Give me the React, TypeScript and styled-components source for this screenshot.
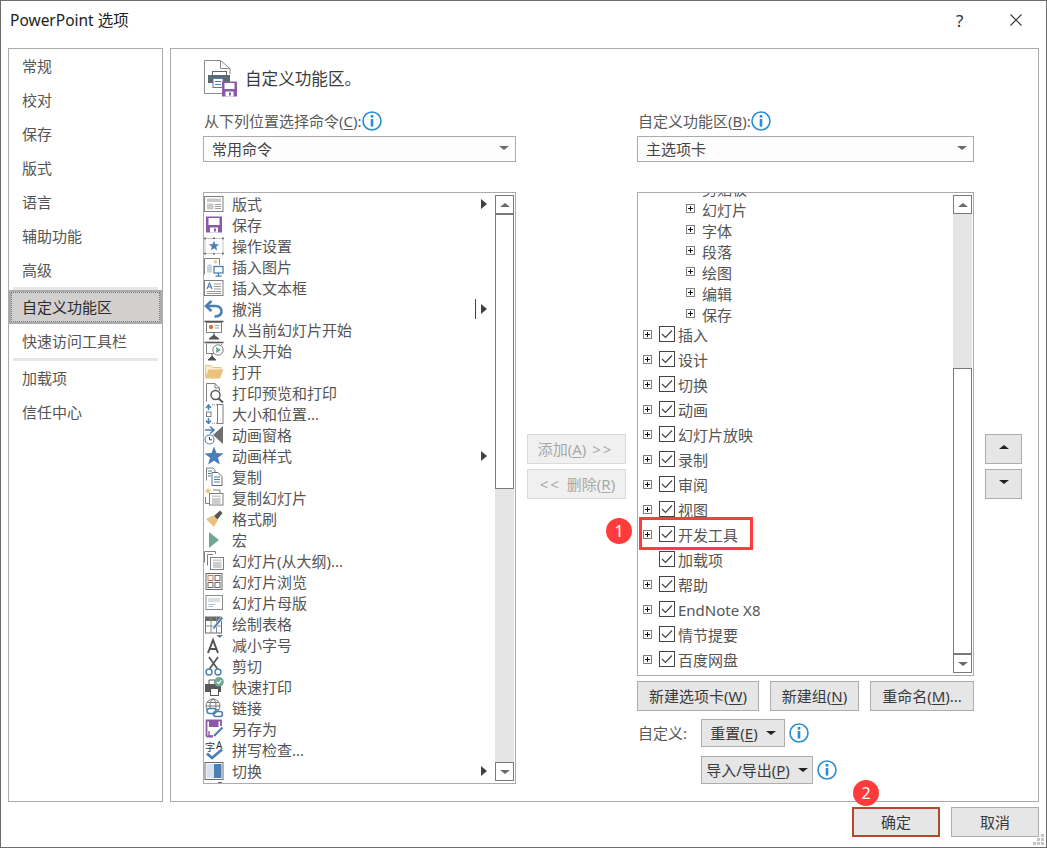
import React from 'react';
import styled, { createGlobalStyle } from 'styled-components';

const GlobalStyle = createGlobalStyle`
  html, body {
    margin: 0;
    padding: 0;
    background: #fff;
  }
  * {
    box-sizing: border-box;
  }
`;

const Dialog = styled.div`
  position: relative;
  width: 1047px;
  height: 848px;
  display: flex;
  flex-direction: column;
  overflow: hidden;
  background: #fff;
  border: 1px solid #6d6d6d;
  font-family: "Noto Sans", "Noto Sans CJK SC", sans-serif;
  font-size: 15px;
  line-height: 21px;
  color: #555;
`;

const TitleBar = styled.div`
  height: 47px;
  flex: none;
  display: flex;
  align-items: center;
  padding: 0 24px 9px 9px;
  color: #222;
  font-size: 15.5px;
`;

const TitleText = styled.div`
  flex: 1;
`;

const HelpGlyph = styled.div`
  width: 54px;
  font-size: 17px;
  color: #333;
`;

const Body = styled.div`
  display: flex;
  gap: 7px;
  padding-left: 7px;
  height: 754px;
  flex: none;
`;

const Sidebar = styled.div`
  width: 155px;
  flex: none;
  border: 1px solid #ababab;
`;

const NavItem = styled.div<{ $active?: boolean }>`
  height: 34px;
  display: flex;
  align-items: center;
  padding-left: ${(p) => (p.$active ? '11px' : '13px')};
  color: ${(p) => (p.$active ? '#2b2b2b' : '#555')};
  background: ${(p) => (p.$active ? '#d2d0ce' : 'transparent')};
  border: ${(p) => (p.$active ? '2px solid #ababab' : 'none')};
  outline: ${(p) => (p.$active ? '1px dotted #777' : 'none')};
  outline-offset: -3px;
`;

const NavRule = styled.div`
  height: 3px;
  margin: 0 4px;
  background: #e6e6e6;
`;

const Panel = styled.div`
  width: 869px;
  flex: none;
  border: 1px solid #ababab;
  padding-left: 32px;
`;

const PanelHeader = styled.div`
  height: 59px;
  display: flex;
  align-items: center;
  gap: 7px;
  font-size: 16.6px;
  color: #3c3c3c;
`;

const Columns = styled.div`
  display: flex;
  align-items: flex-start;
`;

const Column = styled.div<{ $width: number }>`
  width: ${(p) => p.$width}px;
  flex: none;
`;

const ActionColumn = styled.div<{ $width: number }>`
  width: ${(p) => p.$width}px;
  flex: none;
  padding: 326px 0 0 11px;
  display: flex;
  flex-direction: column;
  gap: 5px;
`;

const FieldLabel = styled.div`
  height: 26px;
  margin-bottom: 2px;
  display: flex;
  align-items: center;
  padding-left: 1px;
  color: #5a5a5a;
`;

const Select = styled.div`
  height: 26px;
  margin-bottom: 30px;
  display: flex;
  align-items: center;
  justify-content: space-between;
  padding: 0 3px 0 8px;
  background: #fdfdfd;
  border: 1px solid #ababab;
  color: #444;
`;

const Caret = styled.span<{ $up?: boolean; $size?: number; $color?: string }>`
  display: inline-block;
  width: 0;
  height: 0;
  flex: none;
  border-left: ${(p) => p.$size ?? 5}px solid transparent;
  border-right: ${(p) => p.$size ?? 5}px solid transparent;
  ${(p) => (p.$up ? 'border-bottom' : 'border-top')}: ${(p) => (p.$size ?? 5) - 1}px solid ${(p) => p.$color ?? '#6a6a6a'};
`;

const SelectCaret = styled(Caret)`
  margin: 0 3px 2px 0;
`;

const MenuCaret = styled(Caret)`
  margin-left: 8px;
`;

const ListBox = styled.div<{ $height: number }>`
  height: ${(p) => p.$height}px;
  display: flex;
  background: #fff;
  border: 1px solid #ababab;
`;

const ListBody = styled.div`
  flex: 1;
  min-width: 0;
  overflow: hidden;
`;

const CommandRow = styled.div`
  height: 21px;
  display: flex;
  align-items: center;
  gap: 8px;
  padding-right: 8px;
  white-space: nowrap;
`;

const RowText = styled.span<{ $drop: number }>`
  padding-top: ${(p) => p.$drop * 2}px;
`;

const SubArrow = styled.span<{ $split?: boolean }>`
  margin-left: auto;
  display: flex;
  align-items: center;
  height: 20px;
  ${(p) => (p.$split ? 'border-left: 1px solid #444; padding-left: 5px;' : '')}
  &::after {
    content: '';
    border-top: 5px solid transparent;
    border-bottom: 5px solid transparent;
    border-left: 6px solid #404040;
  }
`;

const ScrollBar = styled.div`
  width: 19px;
  flex: none;
  margin: 2px 1px 2px 0;
  display: flex;
  flex-direction: column;
  background: #e5e5e5;
`;

const ScrollButton = styled.div`
  height: 19px;
  flex: none;
  display: flex;
  align-items: center;
  justify-content: center;
  background: #fff;
  border: 1px solid #7a7a7a;
`;

const ScrollTrack = styled.div<{ $grow: number }>`
  flex: ${(p) => p.$grow};
`;

const ScrollThumb = styled.div<{ $size: number }>`
  height: ${(p) => p.$size}px;
  flex: none;
  background: #fff;
  border: 1px solid #7a7a7a;
`;

const ClippedRows = styled.div`
  margin-top: -16px;
  margin-bottom: -2px;
`;

const TreeChild = styled.div`
  height: 21px;
  display: flex;
  align-items: center;
  gap: 7px;
  padding-left: 48px;
`;

const TreeRow = styled.div`
  height: 25px;
  display: flex;
  align-items: center;
  padding-left: 5px;
`;

const Expander = styled.span<{ $hidden?: boolean }>`
  position: relative;
  width: 9px;
  height: 9px;
  flex: none;
  margin-top: -1px;
  border: 1px solid ${(p) => (p.$hidden ? 'transparent' : '#808080')};
  &::before, &::after {
    content: '';
    display: ${(p) => (p.$hidden ? 'none' : 'block')};
    position: absolute;
    background: #111;
  }
  &::before {
    left: 1px;
    top: 3px;
    width: 5px;
    height: 1px;
  }
  &::after {
    left: 3px;
    top: 1px;
    width: 1px;
    height: 5px;
  }
`;

const CheckBox = styled.span`
  width: 16px;
  height: 16px;
  flex: none;
  margin: -1px 3px 0 7px;
  display: flex;
  align-items: center;
  justify-content: center;
  background: #fff;
  border: 1px solid #444;
`;

const ButtonRow = styled.div`
  display: flex;
  gap: 11px;
  margin-top: 5px;
`;

const PushButton = styled.div<{ $width: number; $height?: number; $primary?: boolean }>`
  width: ${(p) => p.$width}px;
  height: ${(p) => p.$height ?? 30}px;
  flex: none;
  display: flex;
  align-items: center;
  justify-content: center;
  white-space: nowrap;
  color: #3a3a3a;
  background: #e6e6e6;
  border: ${(p) => (p.$primary ? '2px solid #b5472f' : '1px solid #adadad')};
`;

const DisabledButton = styled(PushButton)`
  color: #a8a8a8;
  background: #f0f0f0;
  border-color: #dadada;
`;

const MoveButton = styled(PushButton)`
  padding-bottom: 4px;
`;

const Chevrons = styled.span`
  letter-spacing: 2px;
  margin: 0 2px;
`;

const CustomizeRow = styled.div`
  display: flex;
  align-items: flex-start;
  margin-top: 8px;
`;

const CustomizeLabel = styled.div`
  width: 64px;
  height: 28px;
  flex: none;
  display: flex;
  align-items: center;
  padding-left: 1px;
  color: #5a5a5a;
`;

const CustomizeActions = styled.div`
  display: flex;
  flex-direction: column;
  gap: 9px;
`;

const ActionLine = styled.div`
  display: flex;
  align-items: center;
  gap: 4px;
`;

const Footer = styled.div`
  display: flex;
  justify-content: flex-end;
  gap: 11px;
  padding: 5px 7px 0 0;
`;

const Mnemonic = styled.span`
  text-decoration: underline;
  text-underline-offset: 2px;
`;

const Callout = styled.div<{ $x: number; $y: number }>`
  position: absolute;
  left: ${(p) => p.$x}px;
  top: ${(p) => p.$y}px;
  width: 26px;
  height: 26px;
  display: flex;
  align-items: center;
  justify-content: center;
  border-radius: 50%;
  background: #ff3b3b;
  color: #fff;
  font-size: 16px;
`;

const Highlight = styled.div`
  position: absolute;
  left: 638px;
  top: 516px;
  width: 114px;
  height: 33px;
  border: 3px solid #ff3b3b;
`;

const Grip = styled.svg`
  position: absolute;
  right: 1px;
  bottom: 1px;
  width: 12px;
  height: 12px;
`;

const Ico = styled.svg.attrs({ viewBox: '0 0 20 20' })`
  width: 20px;
  height: 20px;
  flex: none;
`;

const BLUE = '#4a7fb5';
const GRAY = '#6f6f6f';
const LIGHT = '#c9c9c9';
const PURPLE = '#8a5aa8';
const AMBER = '#e9c27c';
const GREEN = '#6fa894';

const starPoints = (cx: number, cy: number, r: number) => {
  const pts: string[] = [];
  for (let i = 0; i < 10; i++) {
    const rad = i % 2 === 0 ? r : r * 0.42;
    const a = (Math.PI / 5) * i - Math.PI / 2;
    pts.push(`${(cx + rad * Math.cos(a)).toFixed(2)},${(cy + rad * Math.sin(a)).toFixed(2)}`);
  }
  return pts.join(' ');
};

const Info = () => (
  <Ico>
    <circle cx="10" cy="10" r="9" fill="#fff" stroke="#2a8dd4" strokeWidth="1.6" />
    <rect x="8.7" y="4" width="2.6" height="2.6" fill="#2a8dd4" />
    <rect x="8.7" y="8" width="2.6" height="7.6" fill="#2a8dd4" />
  </Ico>
);

const Tick = () => (
  <svg width="12" height="10" viewBox="0 0 12 10">
    <path d="M1 5 L4.5 8.5 L11 1.5" fill="none" stroke="#444" strokeWidth="1.2" />
  </svg>
);

const CloseGlyph = () => (
  <svg width="12" height="12" viewBox="0 0 12 12">
    <path d="M.5 .5 L11.5 11.5 M11.5 .5 L.5 11.5" stroke="#333" strokeWidth="1.1" />
  </svg>
);

const HeaderIcon = () => (
  <svg width="35" height="38" viewBox="0 0 35 38">
    <path d="M1.5 .5 H17.5 L27 8.5 V14 M27 8.5 H17.5 V.5 M1.5 .5 V33.5 H20" fill="none" stroke="#8a8a8a" />
    <rect x="9.5" y="11.5" width="14" height="7" fill="#fff" stroke="#666" />
    <path d="M5 15 H27 V23 H20 V19 H10 V23 H5 Z" fill="#5a6a70" />
    <rect x="10" y="18.5" width="10" height="9" fill="#fff" stroke={BLUE} />
    <path d="M12 21.5 H18 M12 24.5 H18" stroke={BLUE} />
    <rect x="19" y="21.5" width="15" height="15" fill={PURPLE} />
    <rect x="21.5" y="23" width="10" height="6" fill="#fff" />
    <rect x="22.5" y="31.5" width="8" height="5" fill="#fff" />
    <rect x="26" y="32.5" width="2" height="3" fill={PURPLE} />
  </svg>
);

const LayoutIcon = () => (
  <Ico>
    <rect x=".5" y="2.5" width="18.5" height="15" fill="#fff" stroke="#7f7f7f" />
    <rect x="3" y="4.5" width="14" height="3.5" fill={LIGHT} />
    <rect x="3" y="9.5" width="6.5" height="6" fill={LIGHT} />
    <path d="M11 10.5 H17 M11 12.5 H17 M11 14.5 H17" stroke="#9a9a9a" />
  </Ico>
);

const SaveIcon = () => (
  <Ico>
    <rect x="2" y="1.5" width="16" height="16" fill={PURPLE} />
    <rect x="4.5" y="3" width="11" height="7" fill="#fff" />
    <rect x="6" y="12.5" width="8" height="5" fill="#fff" />
    <rect x="10" y="13.5" width="2" height="3" fill={PURPLE} />
  </Ico>
);

const ActionIcon = () => (
  <Ico>
    <rect x="1" y="2.5" width="18" height="15" fill="none" stroke="#c4c4c4" />
    <path d="M.2 1.5 H2 V3.3 H.2 Z M9 1.5 H11 V3 H9 Z M18 1.5 H19.8 V3.3 H18 Z M.2 16.7 H2 V18.5 H.2 Z M9 17 H11 V18.5 H9 Z M18 16.7 H19.8 V18.5 H18 Z" fill="#666" />
    <polygon points={starPoints(10, 10, 5.5)} fill={BLUE} />
  </Ico>
);

const PictureIcon = () => (
  <Ico>
    <path d="M.5 17.5 V1.5 H15.5 V8" fill="#fff" stroke="#7f7f7f" />
    <path d="M3 15.5 V9 L5.5 6.5 L8 9 V15.5 Z" fill="#c5d2df" />
    <circle cx="11.5" cy="4.8" r="1.6" fill={AMBER} />
    <rect x="10" y="9.5" width="9" height="6.5" fill="#fff" stroke={BLUE} strokeWidth="1.3" />
    <path d="M14.5 16 V19 M11.5 19.2 H17.5" stroke={BLUE} strokeWidth="1.3" />
  </Ico>
);

const TextBoxIcon = () => (
  <Ico>
    <rect x=".5" y="2.5" width="18.5" height="15" fill="#fff" stroke="#7f7f7f" />
    <path d="M3 11 L5.5 5 L8 11 M4 9 H7" fill="none" stroke={BLUE} strokeWidth="1.2" />
    <path d="M10 6 H17 M10 8.5 H17 M10 11 H17 M3 13.5 H17 M3 15.5 H17" stroke="#9a9a9a" />
  </Ico>
);

const UndoIcon = () => (
  <Ico>
    <path d="M7.5 2 L2 7 L7.5 12" fill="none" stroke={BLUE} strokeWidth="2.6" />
    <path d="M3 7 H11 C16 7 18 10 17.5 13 C17 16 14.5 17.5 10.5 17.5" fill="none" stroke={BLUE} strokeWidth="2.6" />
  </Ico>
);

const ShowCurrentIcon = () => (
  <Ico>
    <path d="M.5 1.5 H19.5" stroke="#555" strokeWidth="1.6" />
    <rect x="2.5" y="2.5" width="15" height="10" fill="#fff" stroke="#7f7f7f" />
    <circle cx="7" cy="7" r="2.2" fill="#d9763c" />
    <path d="M11 5.5 H15 M11 8 H15" stroke="#999" />
    <path d="M10 12.5 V15 M10 15 L5 19 H15 Z" fill="#555" stroke="#555" />
  </Ico>
);

const ShowStartIcon = () => (
  <Ico>
    <path d="M.5 1.5 H19.5" stroke="#555" strokeWidth="1.6" />
    <path d="M2.5 3 V12.5 H12 M17.5 3 V4" fill="none" stroke="#7f7f7f" />
    <path d="M8 12.5 V15 M8 15 L4 19 H12 Z" fill="#555" stroke="#555" />
    <circle cx="14" cy="9" r="5.2" fill="#fff" stroke="#7f7f7f" />
    <polygon points="12.2,6 12.2,12 17,9" fill={GREEN} />
  </Ico>
);

const FolderIcon = () => (
  <Ico>
    <path d="M1.5 15 V3.5 H7 L9 5.5 H17 V8" fill="#fbeccd" stroke={AMBER} />
    <path d="M1 16.5 L4.5 7.5 H19.5 L16 16.5 Z" fill={AMBER} />
  </Ico>
);

const PreviewIcon = () => (
  <Ico>
    <path d="M2.5 18.5 V.5 H11 L15.5 5 V8 M11 .5 V5 H15.5" fill="#fff" stroke="#7f7f7f" />
    <circle cx="11.5" cy="12" r="4.5" fill="#fff" stroke="#555" strokeWidth="1.4" />
    <path d="M14.5 15.5 L19 19.5" stroke="#555" strokeWidth="2" />
  </Ico>
);

const SizeIcon = () => (
  <Ico>
    <path d="M4.5 6 V2 M2 4 L4.5 1 L7 4 M4.5 14 V19 M2 16.5 L4.5 19.5 L7 16.5" fill="none" stroke={BLUE} strokeWidth="1.5" />
    <rect x="2.5" y="8" width="4.5" height="4.5" fill="#fff" stroke="#7f7f7f" />
    <rect x="13.5" y=".5" width="5.5" height="19" fill="#fff" stroke="#7f7f7f" />
    <path d="M8 .8 H13 M8 19.2 H13" stroke="#7f7f7f" strokeDasharray="1 1" />
  </Ico>
);

const PaneIcon = () => (
  <Ico>
    <polygon points="19,1 19,19 9,10" fill={GRAY} />
    <path d="M1 5 H9 M6 1.5 L10 5 L6 8.5" fill="none" stroke={BLUE} strokeWidth="1.6" />
    <circle cx="5.5" cy="14.5" r="4.5" fill="#fff" stroke={BLUE} strokeWidth="1.1" />
    <path d="M5.5 12 V14.8 H8" fill="none" stroke="#444" />
  </Ico>
);

const StarIcon = () => (
  <Ico>
    <polygon points={starPoints(10, 10.5, 10)} fill={BLUE} />
  </Ico>
);

const CopyIcon = () => (
  <Ico>
    <path d="M2.5 13.5 V1 H9 L11 3 V6" fill="#fff" stroke="#7f7f7f" />
    <path d="M8 5.5 H14 L18 9.5 V18.5 H8 Z" fill="#fff" stroke="#6a6a6a" />
    <path d="M10 10 H16 M10 12.5 H16 M10 15 H16 M4 4 H8 M4 6.5 H7 M4 9 H7" stroke={BLUE} />
  </Ico>
);

const DuplicateIcon = () => (
  <Ico>
    <polygon points={starPoints(4, 3, 3.6)} fill={AMBER} />
    <path d="M1.5 9 V15.5 H5" fill="none" stroke="#7f7f7f" />
    <path d="M9 2 H16 V5" fill="none" stroke="#7f7f7f" />
    <rect x="5.5" y="5.5" width="13.5" height="11.5" fill="#fff" stroke="#7f7f7f" />
    <rect x="8" y="7.5" width="8.5" height="1.6" fill={LIGHT} />
    <path d="M8 11 H16.5 M8 13 H16.5 M8 15 H16.5" stroke="#9a9a9a" />
  </Ico>
);

const BrushIcon = () => (
  <Ico>
    <polygon points="2,10 9,6.5 14,11 10,18" fill={AMBER} />
    <path d="M10 7 L13.5 10.5 L18.5 4 L16 1.5 Z" fill="#555" />
  </Ico>
);

const MacroIcon = () => (
  <Ico>
    <polygon points="5,2 5,18 15,10" fill={GREEN} />
  </Ico>
);

const OutlineIcon = () => (
  <Ico>
    <path d="M.5 11.5 V.5 H11.5 V3" fill="#fff" stroke="#7f7f7f" />
    <path d="M3.5 14.5 V3.5 H9" fill="none" stroke="#7f7f7f" />
    <rect x="6.5" y="6.5" width="13" height="12" fill="#fff" stroke="#7f7f7f" />
    <rect x="9" y="8.5" width="8.5" height="1.6" fill={LIGHT} />
    <path d="M9 12 H17.5 M9 14 H17.5 M9 16 H17.5" stroke="#9a9a9a" />
  </Ico>
);

const SorterIcon = () => (
  <Ico>
    <rect x="2" y="1.5" width="16" height="16" fill="#fff" stroke="#6a6a6a" />
    <rect x="4" y="3.5" width="5" height="5" fill="#fff" stroke="#d9763c" />
    <rect x="11" y="3.5" width="5" height="5" fill="#fff" stroke="#6a6a6a" />
    <rect x="4" y="10.5" width="5" height="5" fill="#fff" stroke="#6a6a6a" />
    <rect x="11" y="10.5" width="5" height="5" fill="#fff" stroke="#6a6a6a" />
  </Ico>
);

const MasterIcon = () => (
  <Ico>
    <rect x="2" y="2.5" width="16.5" height="14" fill="#fff" stroke="#8a8a8a" />
    <path d="M4.5 6 H16" stroke={BLUE} strokeDasharray="1 1" />
    <path d="M4.5 8 H16" stroke="#777" strokeDasharray="1 1" />
    <path d="M4.5 11.5 H11 M4.5 13.5 H9" stroke="#a9bfd6" />
  </Ico>
);

const TableIcon = () => (
  <Ico>
    <rect x="1.5" y="3" width="16" height="16" fill="#fff" stroke="#6a6a6a" />
    <rect x="1.5" y="3" width="16" height="4" fill="#6a6a6a" />
    <path d="M1.5 12 H17.5 M7 3 V19 M12.5 3 V19" stroke="#8a8a8a" />
    <path d="M9 13 L17.5 2.5 L19.5 4 L11 14.5 L8.5 15.5 Z" fill={BLUE} stroke="#fff" strokeWidth=".6" />
  </Ico>
);

const ShrinkFontIcon = () => (
  <Ico>
    <path d="M4 18 L9 5 L14 18 M6 14 H12" fill="none" stroke="#555" strokeWidth="2" />
    <polygon points="12.5,0 19,0 15.7,3" fill={BLUE} />
  </Ico>
);

const CutIcon = () => (
  <Ico>
    <path d="M5 1 L13.5 13 M14 1 L5.5 13" stroke="#555" strokeWidth="1.7" />
    <circle cx="5" cy="16" r="3" fill="none" stroke={BLUE} strokeWidth="1.4" />
    <circle cx="14" cy="16" r="3" fill="none" stroke={BLUE} strokeWidth="1.4" />
  </Ico>
);

const QuickPrintIcon = () => (
  <Ico>
    <path d="M5 7 V3 H11 V7" fill="#fff" stroke="#555" />
    <path d="M1 7 H17 V15 H14 V12 H6 V15 H1 Z" fill="#5a5a5a" />
    <rect x="6.5" y="11.5" width="8" height="7" fill="#fff" stroke="#555" />
    <circle cx="15" cy="4.8" r="4.8" fill={GREEN} />
    <path d="M12.8 4.8 L14.5 6.5 L17.3 3.4" fill="none" stroke="#fff" strokeWidth="1.2" />
  </Ico>
);

const LinkIcon = () => (
  <Ico>
    <circle cx="9" cy="8" r="7" fill="#fff" stroke="#777" />
    <ellipse cx="9" cy="8" rx="3" ry="7" fill="none" stroke="#777" />
    <path d="M2 8 H16 M3 4.5 H15 M3 11.5 H15" stroke="#777" />
    <rect x="3" y="10.5" width="9" height="5" rx="2.5" fill="#fff" stroke={BLUE} strokeWidth="1.5" />
    <rect x="9.5" y="13.5" width="9" height="5" rx="2.5" fill="none" stroke={BLUE} strokeWidth="1.5" />
  </Ico>
);

const SaveAsIcon = () => (
  <Ico>
    <path d="M2.5 17.5 V1.5 H17 V7 M2.5 17.5 H9" fill="none" stroke={PURPLE} strokeWidth="1.8" />
    <rect x="5" y="2" width="9.5" height="6" fill={PURPLE} />
    <path d="M5 12 V17 H9" fill="none" stroke={PURPLE} strokeWidth="1.4" />
    <path d="M10 17 L18.5 8.5" stroke={BLUE} strokeWidth="2.2" />
  </Ico>
);

const SpellGlyph = styled.text`
  font-size: 10px;
  fill: #333;
`;

const SpellIcon = () => (
  <Ico>
    <SpellGlyph x="1" y="11">字</SpellGlyph>
    <SpellGlyph x="12" y="9">A</SpellGlyph>
    <path d="M3 13.5 L8 18 L18 9.5" fill="none" stroke={BLUE} strokeWidth="2.8" />
  </Ico>
);

const SwitchIcon = () => (
  <Ico>
    <rect x="1" y="1.5" width="18" height="17" fill="#fff" stroke="#6a6a6a" />
    <rect x="2.5" y="3" width="7.5" height="14" fill="#d6e2ef" />
    <rect x="10" y="3" width="7.5" height="14" fill={BLUE} />
  </Ico>
);

const ClippedIcon = () => (
  <Ico>
    <circle cx="16" cy="1.5" r="2" fill="#555" />
  </Ico>
);

type Command = {
  label: string;
  Icon: React.ComponentType;
  sub?: 'arrow' | 'split';
};

const COMMANDS: Command[] = [
  { label: '版式', Icon: LayoutIcon, sub: 'arrow' },
  { label: '保存', Icon: SaveIcon },
  { label: '操作设置', Icon: ActionIcon },
  { label: '插入图片', Icon: PictureIcon },
  { label: '插入文本框', Icon: TextBoxIcon },
  { label: '撤消', Icon: UndoIcon, sub: 'split' },
  { label: '从当前幻灯片开始', Icon: ShowCurrentIcon },
  { label: '从头开始', Icon: ShowStartIcon },
  { label: '打开', Icon: FolderIcon },
  { label: '打印预览和打印', Icon: PreviewIcon },
  { label: '大小和位置...', Icon: SizeIcon },
  { label: '动画窗格', Icon: PaneIcon },
  { label: '动画样式', Icon: StarIcon, sub: 'arrow' },
  { label: '复制', Icon: CopyIcon },
  { label: '复制幻灯片', Icon: DuplicateIcon },
  { label: '格式刷', Icon: BrushIcon },
  { label: '宏', Icon: MacroIcon },
  { label: '幻灯片(从大纲)...', Icon: OutlineIcon },
  { label: '幻灯片浏览', Icon: SorterIcon },
  { label: '幻灯片母版', Icon: MasterIcon },
  { label: '绘制表格', Icon: TableIcon },
  { label: '减小字号', Icon: ShrinkFontIcon },
  { label: '剪切', Icon: CutIcon },
  { label: '快速打印', Icon: QuickPrintIcon },
  { label: '链接', Icon: LinkIcon },
  { label: '另存为', Icon: SaveAsIcon },
  { label: '拼写检查...', Icon: SpellIcon },
  { label: '切换', Icon: SwitchIcon, sub: 'arrow' },
  { label: '', Icon: ClippedIcon },
];

const NAV_TOP = ['常规', '校对', '保存', '版式', '语言', '辅助功能', '高级'];
const TREE_CHILDREN = ['剪贴板', '幻灯片', '字体', '段落', '绘图', '编辑', '保存'];
const TREE_TABS = ['插入', '设计', '切换', '动画', '幻灯片放映', '录制', '审阅', '视图', '开发工具', '加载项', '帮助', 'EndNote X8', '情节提要', '百度网盘'];

const Scroll = ({ before, thumb }: { before: number; thumb: number }) => (
  <ScrollBar>
    <ScrollButton>
      <Caret $up />
    </ScrollButton>
    <ScrollTrack $grow={before} />
    <ScrollThumb $size={thumb} />
    <ScrollTrack $grow={1 - before} />
    <ScrollButton>
      <Caret />
    </ScrollButton>
  </ScrollBar>
);

const App = () => {
  return (
    <Dialog>
      <GlobalStyle />
      <TitleBar>
        <TitleText>PowerPoint 选项</TitleText>
        <HelpGlyph>?</HelpGlyph>
        <CloseGlyph />
      </TitleBar>
      <Body>
        <Sidebar>
          {NAV_TOP.map((item) => (
            <NavItem key={item}>{item}</NavItem>
          ))}
          <NavRule />
          <NavItem $active>自定义功能区</NavItem>
          <NavItem>快速访问工具栏</NavItem>
          <NavRule />
          <NavItem>加载项</NavItem>
          <NavItem>信任中心</NavItem>
        </Sidebar>
        <Panel>
          <PanelHeader>
            <HeaderIcon />
            自定义功能区。
          </PanelHeader>
          <Columns>
            <Column $width={313}>
              <FieldLabel>
                从下列位置选择命令(<Mnemonic>C</Mnemonic>):
                <Info />
              </FieldLabel>
              <Select>
                常用命令
                <SelectCaret />
              </Select>
              <ListBox $height={592}>
                <ListBody>
                  {COMMANDS.map(({ label, Icon, sub }) => (
                    <CommandRow key={label}>
                      <Icon />
                      <RowText $drop={1}>{label}</RowText>
                      {sub && <SubArrow $split={sub === 'split'} />}
                    </CommandRow>
                  ))}
                </ListBody>
                <Scroll before={0} thumb={275} />
              </ListBox>
            </Column>
            <ActionColumn $width={121}>
              <DisabledButton $width={99}>
                <span>
                  添加(<Mnemonic>A</Mnemonic>) <Chevrons>&gt;&gt;</Chevrons>
                </span>
              </DisabledButton>
              <DisabledButton $width={99}>
                <span>
                  <Chevrons>&lt;&lt;</Chevrons> 删除(<Mnemonic>R</Mnemonic>)
                </span>
              </DisabledButton>
            </ActionColumn>
            <Column $width={337}>
              <FieldLabel>
                自定义功能区(<Mnemonic>B</Mnemonic>):
                <Info />
              </FieldLabel>
              <Select>
                主选项卡
                <SelectCaret />
              </Select>
              <ListBox $height={484}>
                <ListBody>
                  <ClippedRows>
                    {TREE_CHILDREN.map((item) => (
                      <TreeChild key={item}>
                        <Expander />
                        <RowText $drop={2}>{item}</RowText>
                      </TreeChild>
                    ))}
                  </ClippedRows>
                  {TREE_TABS.map((item) => (
                    <TreeRow key={item}>
                      <Expander $hidden={item === '加载项'} />
                      <CheckBox>
                        <Tick />
                      </CheckBox>
                      <RowText $drop={1}>{item}</RowText>
                    </TreeRow>
                  ))}
                </ListBody>
                <Scroll before={1} thumb={286} />
              </ListBox>
              <ButtonRow>
                <PushButton $width={122}>
                  <span>
                    新建选项卡(<Mnemonic>W</Mnemonic>)
                  </span>
                </PushButton>
                <PushButton $width={89}>
                  <span>
                    新建组(<Mnemonic>N</Mnemonic>)
                  </span>
                </PushButton>
                <PushButton $width={104}>
                  <span>
                    重命名(<Mnemonic>M</Mnemonic>)...
                  </span>
                </PushButton>
              </ButtonRow>
              <CustomizeRow>
                <CustomizeLabel>自定义:</CustomizeLabel>
                <CustomizeActions>
                  <ActionLine>
                    <PushButton $width={84} $height={28}>
                      <span>
                        重置(<Mnemonic>E</Mnemonic>)
                      </span>
                      <MenuCaret $color="#222" />
                    </PushButton>
                    <Info />
                  </ActionLine>
                  <ActionLine>
                    <PushButton $width={112} $height={28}>
                      <span>
                        导入/导出(<Mnemonic>P</Mnemonic>)
                      </span>
                      <MenuCaret $color="#222" />
                    </PushButton>
                    <Info />
                  </ActionLine>
                </CustomizeActions>
              </CustomizeRow>
            </Column>
            <ActionColumn $width={48}>
              <MoveButton $width={37}>
                <Caret $up $color="#222" />
              </MoveButton>
              <MoveButton $width={37}>
                <Caret $color="#222" />
              </MoveButton>
            </ActionColumn>
          </Columns>
        </Panel>
      </Body>
      <Footer>
        <PushButton $width={88} $primary>确定</PushButton>
        <PushButton $width={88}>取消</PushButton>
      </Footer>
      <Highlight />
      <Callout $x={605} $y={517}>1</Callout>
      <Callout $x={852} $y={779}>2</Callout>
      <Grip viewBox="0 0 12 12">
        <path d="M8 0 H11 V3 H8 Z M4 4 H7 V7 H4 Z M8 4 H11 V7 H8 Z M0 8 H3 V11 H0 Z M4 8 H7 V11 H4 Z M8 8 H11 V11 H8 Z" fill="#c4c4c4" />
      </Grip>
    </Dialog>
  );
};

export default App;
